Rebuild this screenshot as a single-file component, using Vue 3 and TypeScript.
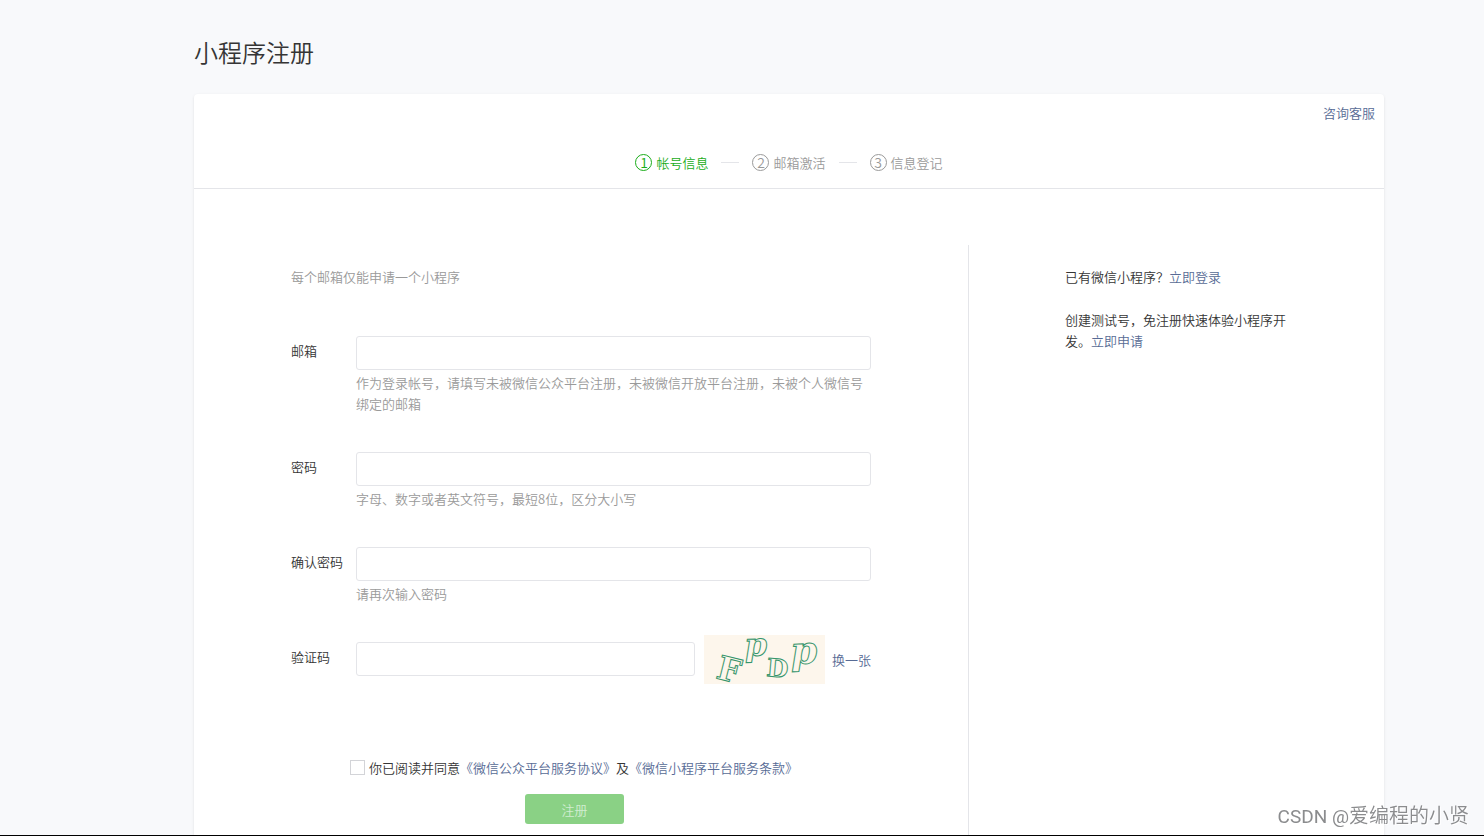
<script setup lang="ts">
import { ref } from 'vue'

interface Step {
  index: number
  label: string
}

interface Field {
  id: string
  label: string
  type: string
  hint: string
}

const steps: Step[] = [
  { index: 1, label: '帐号信息' },
  { index: 2, label: '邮箱激活' },
  { index: 3, label: '信息登记' },
]
const current = 1

const fields: Field[] = [
  {
    id: 'email',
    label: '邮箱',
    type: 'text',
    hint: '作为登录帐号，请填写未被微信公众平台注册，未被微信开放平台注册，未被个人微信号绑定的邮箱',
  },
  { id: 'password', label: '密码', type: 'password', hint: '字母、数字或者英文符号，最短8位，区分大小写' },
  { id: 'confirm', label: '确认密码', type: 'password', hint: '请再次输入密码' },
]

const values = ref<Record<string, string>>({ email: '', password: '', confirm: '' })
const captcha = ref('')
const agreed = ref(false)
</script>

<template>
  <div class="page">
    <h1 class="title">小程序注册</h1>

    <main class="card">
      <header class="card-head">
        <a class="service" href="#">咨询客服</a>
        <ol class="steps">
          <li v-for="s in steps" :key="s.index" class="step" :class="{ active: s.index === current }">
            <span class="num">{{ s.index }}</span>
            <span>{{ s.label }}</span>
          </li>
        </ol>
      </header>

      <div class="card-body">
        <form class="form" @submit.prevent>
          <p class="intro">每个邮箱仅能申请一个小程序</p>

          <div v-for="f in fields" :key="f.id" class="field">
            <label class="label" :for="f.id">{{ f.label }}</label>
            <div class="control">
              <input :id="f.id" v-model="values[f.id]" class="input" :type="f.type" />
              <p class="hint">{{ f.hint }}</p>
            </div>
          </div>

          <div class="field">
            <label class="label" for="captcha">验证码</label>
            <div class="control captcha-row">
              <input id="captcha" v-model="captcha" class="input" type="text" />
              <svg class="captcha" viewBox="0 0 121 49" width="121" height="49">
                <rect width="121" height="49" fill="#fdf6ec" />
                <g class="letters">
                  <text x="11" y="43" transform="rotate(14 11 43)" font-size="33">F</text>
                  <text x="41" y="21" transform="rotate(-2 41 21)" font-size="32" font-style="italic">p</text>
                  <text x="62" y="41" transform="rotate(5 62 41)" font-size="25">D</text>
                  <text x="87" y="29" transform="rotate(-2 87 29)" font-size="38" font-style="italic">p</text>
                </g>
              </svg>
              <a href="#">换一张</a>
            </div>
          </div>

          <div class="agree">
            <input id="agree" v-model="agreed" class="check" type="checkbox" />
            <label for="agree">你已阅读并同意</label><a href="#">《微信公众平台服务协议》</a><span>及</span><a href="#">《微信小程序平台服务条款》</a>
          </div>

          <div class="actions">
            <button class="submit" type="submit">注册</button>
          </div>
        </form>

        <aside class="side">
          <p>已有微信小程序？<a href="#">立即登录</a></p>
          <p>创建测试号，免注册快速体验小程序开发。<a href="#">立即申请</a></p>
        </aside>
      </div>
    </main>

    <div class="watermark"><span class="latin">CSDN @</span>爱编程的小贤</div>
    <div class="bottom-edge"></div>
  </div>
</template>

<style>
body {
  background: #f8f9fb;
}
</style>

<style scoped>
.page {
  box-sizing: border-box;
  display: flex;
  flex-direction: column;
  min-height: 100vh;
  padding: 34px 100px 0 194px;
  color: #353535;
  background: #f8f9fb;
  font-family: "Noto Sans CJK SC", sans-serif;
  font-size: 13px;
  font-weight: 350;
  line-height: 21px;
}

p,
h1,
ol {
  margin: 0;
  padding: 0;
}

a {
  color: #576b95;
  text-decoration: none;
}

.title {
  margin-bottom: 24px;
  font-size: 24px;
  font-weight: 350;
  line-height: 36px;
}

.card {
  display: flex;
  flex: 1;
  flex-direction: column;
  background: #fff;
  border-radius: 4px 4px 0 0;
  box-shadow: 0 1px 3px rgba(0, 0, 0, 0.1);
}

.card-head {
  display: flex;
  flex-direction: column;
  gap: 29px;
  padding: 8px 9px 15px;
  border-bottom: 1px solid #e4e5e9;
}

.service {
  align-self: flex-end;
}

.steps {
  display: flex;
  justify-content: center;
  list-style: none;
  color: #9a9a9a;
}

.step {
  display: flex;
  align-items: center;
  gap: 4px;
}

.step + .step::before {
  content: "";
  width: 18px;
  margin: 0 9px 0 13px;
  border-top: 1px solid #e4e5e9;
}

.step.active {
  color: #1aad19;
}

.num {
  box-sizing: border-box;
  width: 17px;
  height: 17px;
  border: 1px solid currentColor;
  border-radius: 50%;
  font-size: 14px;
  line-height: 15px;
  text-align: center;
}

.card-body {
  display: flex;
  flex: 1;
  padding-top: 56px;
}

.form {
  flex: 1;
  padding: 21px 97px 11px;
}

.intro {
  margin-bottom: 49px;
  color: #9a9a9a;
}

.field {
  display: flex;
  margin-bottom: 38px;
}

.label {
  width: 65px;
  line-height: 30px;
}

.control {
  flex: 1;
  min-width: 0;
}

.input {
  box-sizing: border-box;
  display: block;
  width: 100%;
  height: 34px;
  padding: 0 10px;
  color: inherit;
  background: #fff;
  border: 1px solid #e4e5e9;
  border-radius: 3px;
  font: inherit;
  outline: none;
}

.hint {
  margin-top: 2px;
  color: #9a9a9a;
}

.captcha-row {
  display: flex;
  align-items: center;
  height: 34px;
}

.captcha-row .input {
  flex: 1;
  min-width: 0;
}

.captcha {
  flex: none;
  margin: 0 7px 0 9px;
  overflow: visible;
}

.letters {
  fill: none;
  stroke: #36956b;
  stroke-width: 1;
  font-family: "DejaVu Serif", serif;
  font-weight: 700;
}

.agree {
  display: flex;
  align-items: center;
  margin: 81px 0 16px 59px;
}

.check {
  box-sizing: border-box;
  width: 15px;
  height: 15px;
  margin: 0 4px 0 0;
  appearance: none;
  background: #fff;
  border: 1px solid #d3d4d8;
}

.check:checked {
  background: #1aad19;
}

.actions {
  display: flex;
  justify-content: center;
  padding-right: 13px;
}

.submit {
  width: 99px;
  height: 30px;
  padding: 0;
  color: #d1edd1;
  background: #8ad185;
  border: 0;
  border-radius: 3px;
  font: inherit;
}

.side {
  box-sizing: border-box;
  width: 416px;
  padding: 21px 97px 0 96px;
  border-left: 1px solid #e4e5e9;
}

.side p + p {
  margin-top: 22px;
}

.watermark {
  position: fixed;
  right: 15px;
  bottom: 4px;
  color: #8b8c8e;
  font-size: 20px;
  line-height: 30px;
  text-shadow: 1px 1px 0 #fff;
}

.latin {
  font-family: Roboto, sans-serif;
  font-size: 19px;
  font-weight: 400;
}

.bottom-edge {
  position: fixed;
  right: 0;
  bottom: 0;
  left: 0;
  height: 1px;
  background: #000;
}
</style>
